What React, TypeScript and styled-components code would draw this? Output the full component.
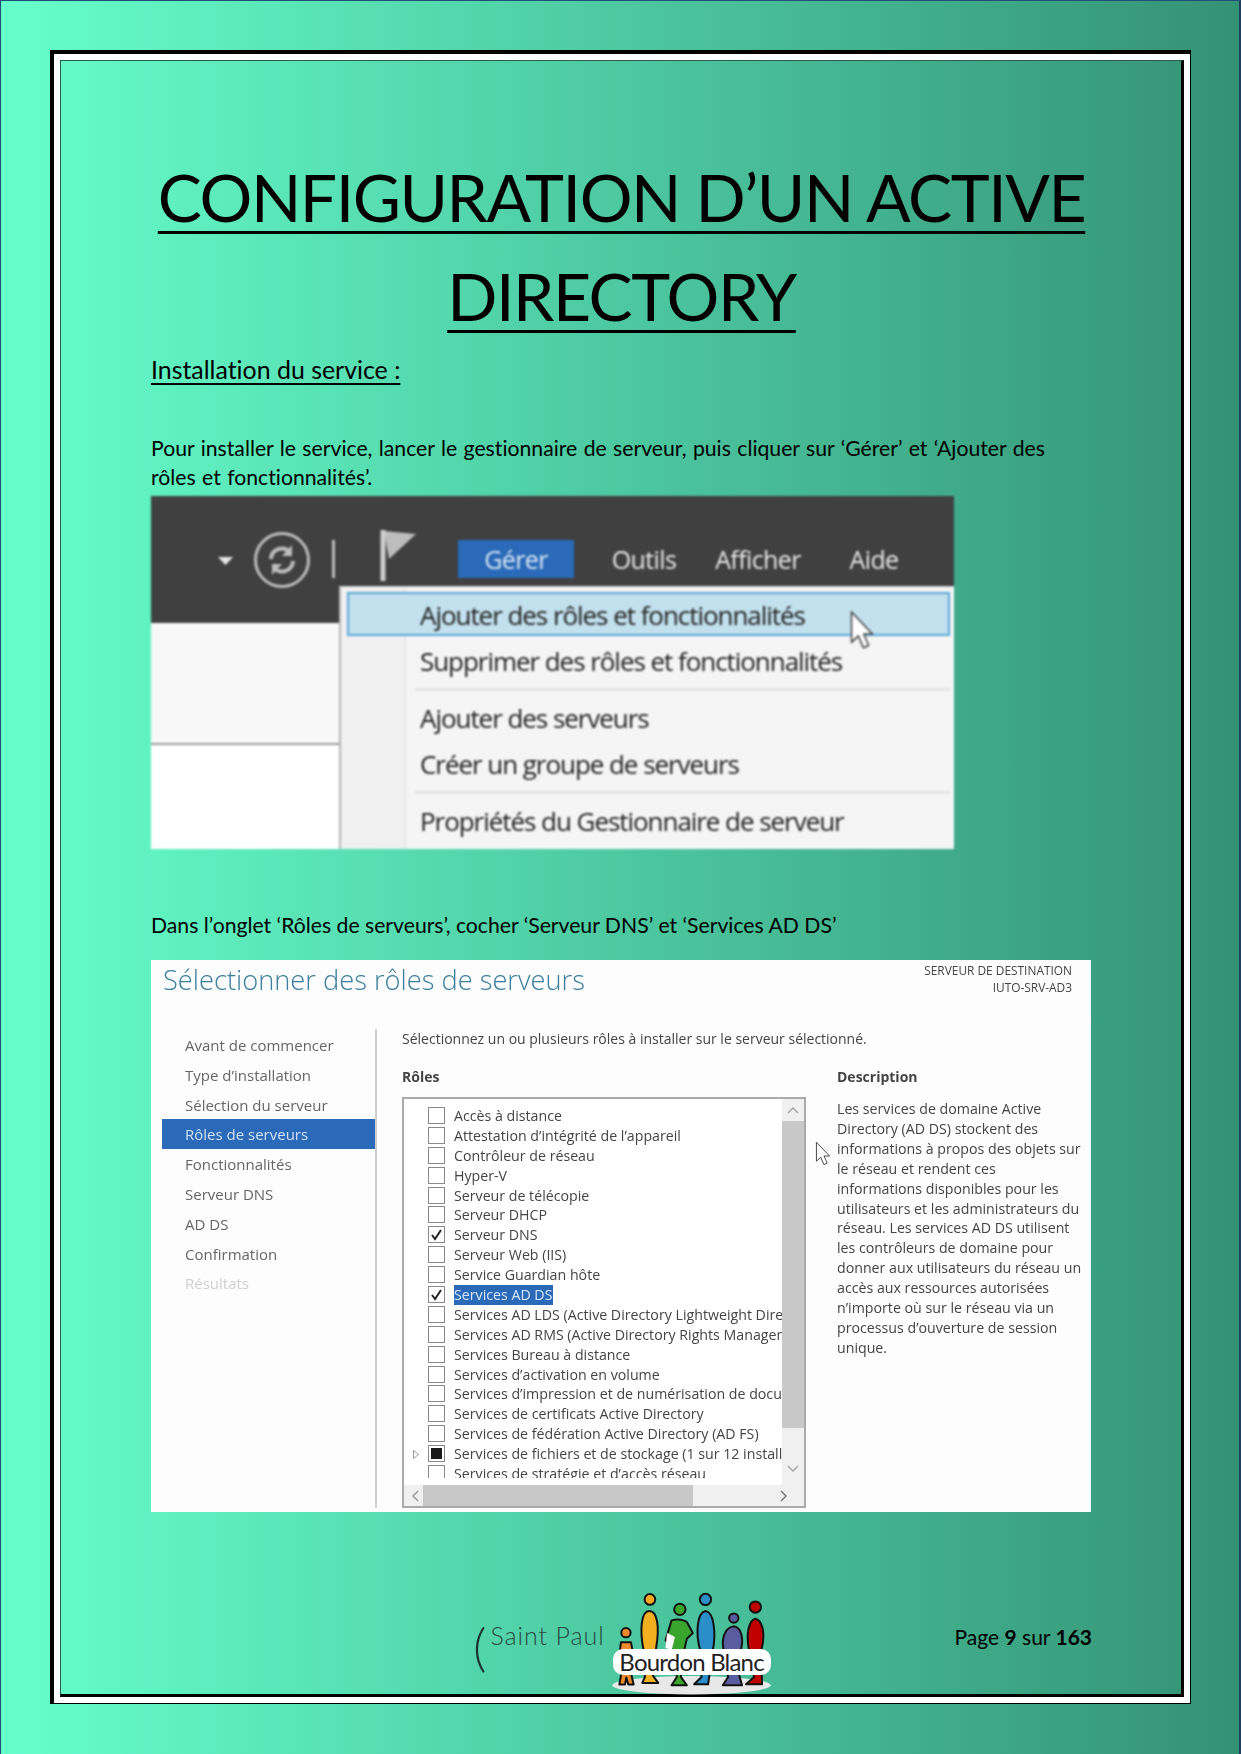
import React from "react";
import styled, { createGlobalStyle } from "styled-components";

const Global = createGlobalStyle`
  html, body { margin: 0; padding: 0; background: #fff; }
  * { box-sizing: border-box; }
`;

const Page = styled.div`
  width: 1241px; height: 1754px; overflow: hidden;
  padding: 49px 48px 0 49px;
  border-top: 1px solid #1f4e79; border-left: 1px solid #1f4e79; border-right: 2px solid #1f3f5f;
  background: linear-gradient(90deg, #66ffcc 0%, #349274 100%);
  font-family: Lato, "Liberation Sans", sans-serif; color: #000;
  font-variant-ligatures: none;
`;
const OuterFrame = styled.div`
  width: 1141px; height: 1654px;
  border-style: solid; border-color: #000; border-width: 4px 1px 1px 4px;
`;
const WhiteRing = styled.div`
  height: 100%; border: 6px solid #fff;
`;
const Inner = styled.div`
  height: 100%; padding: 86px 89px 0 90px;
  border-style: solid; border-color: #2c5a4c #000 #000 #2c5a4c; border-width: 1px 3px 3px 1px;
  display: flex; flex-direction: column;
`;
const Title = styled.h1`
  margin: 0; font-size: 66px; line-height: 99px; font-weight: 400; text-align: center;
  text-decoration: underline; text-decoration-thickness: 3px; text-underline-offset: 9px;
  letter-spacing: -1.45px;
`;
const SubHeading = styled.h2`
  margin: 9px 0 0; font-size: 24.9px; line-height: 30px; font-weight: 400;
  text-decoration: underline; text-decoration-thickness: 2px; text-underline-offset: 4px;
`;
const Para = styled.p<{ $top: number; $spread?: number }>`
  margin: ${(p) => p.$top}px 0 0; font-size: 21.2px; line-height: 29px;
  word-spacing: ${(p) => p.$spread ?? 0}px;
`;

/* first capture */
const ShotMenu = styled.div`
  position: relative; width: 803px; height: 353px; margin-top: 4px; background: #fff;
  overflow: hidden; filter: blur(0.8px); font-family: "Open Sans", sans-serif;
`;
const DarkBar = styled.div`
  height: 127px; background: #404040; padding: 36px 0 0 67px;
  display: flex; align-items: flex-start;
`;
const Caret = styled.svg` margin: 25px 0 0 0; `;
const Refresh = styled.svg` margin: 0 0 0 21px; `;
const Rule = styled.div`
  width: 3px; height: 38px; margin: 8px 0 0 22px; background: #bdbdbd;
`;
const Flag = styled.svg` margin: -3px 0 0 45px; `;
const TopItem = styled.div<{ $on?: boolean; $left: number; $w: number }>`
  margin: 8px 0 0 ${(p) => p.$left}px; width: ${(p) => p.$w}px; height: 38px;
  background: ${(p) => (p.$on ? "#2a6ab8" : "transparent")};
  color: ${(p) => (p.$on ? "#d8e6f5" : "#e8e8e8")};
  font-size: 25px; line-height: 38px; letter-spacing: -0.6px; text-align: center; white-space: nowrap;
`;
const GreyPane = styled.div`
  height: 122px; background: #f8f8f8; border-bottom: 2px solid #9a9a9a;
`;
const Menu = styled.div`
  position: absolute; left: 188px; top: 90px; right: 0; bottom: 0;
  background: #f5f5f5; border-left: 2px solid #b5b5b5; border-top: 1px solid #c8c8c8;
  padding: 5px 4px 0 6px; display: flex; flex-direction: column;
  &::before {
    content: ""; position: absolute; left: 0; top: 0; bottom: 0; width: 64px;
    background: #f0f0f0; border-right: 1px solid #e0e0e0;
  }
`;
const MenuItem = styled.div<{ $on?: boolean }>`
  position: relative; height: ${(p) => (p.$on ? 44 : 46)}px; margin-bottom: ${(p) => (p.$on ? 2 : 0)}px;
  padding-left: 71px; border: 2px solid ${(p) => (p.$on ? "#5aa8d8" : "transparent")};
  background: ${(p) => (p.$on ? "#c2e0ee" : "transparent")};
  font-size: 26px; line-height: 42px; letter-spacing: -1.05px; color: #222; white-space: nowrap;
`;
const MenuSep = styled.div<{ $gap: number }>`
  position: relative; height: 3px; margin: ${(p) => p.$gap}px 0 ${(p) => p.$gap}px 68px; background: #e4e4e4;
`;
const MenuCursor = styled.svg`
  position: absolute; left: 698px; top: 114px;
`;

/* second capture */
const ShotRoles = styled.div`
  position: relative; width: 940px; height: 552px; margin-top: 20px; background: #fdfdfd;
  overflow: hidden; filter: blur(0.6px); font-family: "Open Sans", sans-serif; color: #444;
  display: flex; flex-direction: column;
`;
const RolesHead = styled.div`
  height: 69px; display: flex; justify-content: space-between; padding: 0 19px 0 12px;
`;
const RolesTitle = styled.div`
  font-size: 27.25px; line-height: 40px; font-weight: 300; color: #3a7f9f;
`;
const Target = styled.div`
  margin-top: 2px; font-size: 11.9px; line-height: 16.5px; text-align: right; color: #444;
`;
const RolesBody = styled.div`
  display: flex; height: 479px;
`;
const Sidebar = styled.div`
  width: 226px; padding: 1px 0 0 11px; border-right: 2px solid #d0d0d0;
  display: flex; flex-direction: column;
`;
const Step = styled.div<{ $on?: boolean; $off?: boolean }>`
  height: 29.8px; width: 213px; padding-left: 23px; font-size: 15px; line-height: 30px;
  background: ${(p) => (p.$on ? "#2a6ab8" : "transparent")};
  color: ${(p) => (p.$on ? "#cfe0f5" : p.$off ? "#cfcfcf" : "#666")};
`;
const Main = styled.div`
  flex: 1; padding-left: 25px;
`;
const Intro = styled.div`
  font-size: 14px; line-height: 19px; color: #444; white-space: nowrap;
`;
const Columns = styled.div`
  margin-top: 19px; display: grid; grid-template-columns: 404px 254px; column-gap: 31px;
`;
const ColHead = styled.div`
  font-size: 14px; line-height: 20px; font-weight: 700; color: #444;
`;
const ListBox = styled.div`
  margin-top: 10px; width: 404px; height: 411px; border: 2px solid #aaa; background: #fff;
  display: grid; grid-template-columns: 1fr 22px; grid-template-rows: 1fr 21px;
`;
const Viewport = styled.div`
  margin: 7px 0 7px; overflow: hidden;
`;
const Row = styled.div`
  height: 19.9px; position: relative; padding-left: 50px; white-space: nowrap;
  font-size: 14.2px; line-height: 20px; color: #444; display: flex; align-items: center;
`;
const Box = styled.span<{ $fill?: boolean }>`
  position: absolute; left: 24px; top: 1px; width: 17px; height: 17px;
  border: 1.5px solid #8a8a8a; background: #fff;
  display: flex; align-items: center; justify-content: center;
  &::after {
    content: ""; display: ${(p) => (p.$fill ? "block" : "none")};
    width: 11px; height: 11px; background: #1a1a1a;
  }
`;
const Expander = styled.svg`
  position: absolute; left: 9px; top: 6px;
`;
const Picked = styled.span`
  background: #2a6ab8; color: #d6e6fa; margin-left: 0; padding-right: 1px; height: 20px;
`;
const VBar = styled.div`
  background: #f0f0f0; display: flex; flex-direction: column; align-items: center;
`;
const VThumb = styled.div`
  width: 100%; height: 307px; background: #c8c8c8; margin-top: 21px;
`;
const VEnd = styled.svg`
  margin-top: auto; margin-bottom: 13px;
`;
const VStart = styled.svg`
  margin-top: 8px; margin-bottom: -14px;
`;
const HBar = styled.div`
  grid-column: 1 / span 2; background: #f0f0f0; display: flex; align-items: center; padding: 0 17px 0 8px;
`;
const HThumb = styled.div`
  width: 270px; height: 100%; margin-left: 4px; background: #c8c8c8;
`;
const HEnd = styled.svg` margin-left: auto; `;
const Description = styled.div`
  margin-top: 12px; font-size: 14.2px; line-height: 19.9px; color: #444; white-space: pre-line; width: 260px;
`;
const RolesCursor = styled.svg`
  position: absolute; left: 664px; top: 181px;
`;

/* footer */
const Footer = styled.div`
  margin-top: 77px; height: 104px; display: flex; align-items: flex-start; position: relative;
`;
const Paren = styled.div`
  margin: 29px 0 0 322px; font-size: 52px; line-height: 56px; font-weight: 300; color: #1f332e;
`;
const SaintPaul = styled.div`
  margin: 31px 0 0 4px; font-size: 25px; line-height: 30px; font-weight: 300; color: #2b4a42; letter-spacing: 0.9px;
`;
const Logo = styled.div`
  position: relative; width: 163px; height: 111px; margin: -2px 0 0 6px;
`;
const Pill = styled.div`
  position: absolute; left: 2px; top: 62px; width: 158px; height: 26px; border-radius: 10px;
  background: #fff; color: #222; font-size: 24px; line-height: 26px; text-align: center; white-space: nowrap;
  letter-spacing: -0.8px; font-weight: 400;
`;
const PageNo = styled.div`
  margin: 34px 0 0 auto; font-size: 21px; line-height: 28px; color: #000;
`;

const Cursor = ({ as: Comp, w, h }: { as: any; w: number; h: number }) => (
  <Comp width={w} height={h} viewBox="0 0 13 21">
    <path d="M1 1 L1 17 L4.6 13.6 L7.2 19.8 L10 18.6 L7.4 12.6 L12 12.6 Z" fill="#fff" stroke="#444" strokeWidth="0.8" strokeLinejoin="round" />
  </Comp>
);

const roles: { t: string; k?: "check" | "fill" | "cut" | "pick"; }[] = [
  { t: "Accès à distance" },
  { t: "Attestation d’intégrité de l’appareil" },
  { t: "Contrôleur de réseau" },
  { t: "Hyper-V" },
  { t: "Serveur de télécopie" },
  { t: "Serveur DHCP" },
  { t: "Serveur DNS", k: "check" },
  { t: "Serveur Web (IIS)" },
  { t: "Service Guardian hôte" },
  { t: "Services AD DS", k: "pick" },
  { t: "Services AD LDS (Active Directory Lightweight Directory)" },
  { t: "Services AD RMS (Active Directory Rights Management)" },
  { t: "Services Bureau à distance" },
  { t: "Services d’activation en volume" },
  { t: "Services d’impression et de numérisation de documents" },
  { t: "Services de certificats Active Directory" },
  { t: "Services de fédération Active Directory (AD FS)" },
  { t: "Services de fichiers et de stockage (1 sur 12 installés)", k: "fill" },
  { t: "Services de stratégie et d’accès réseau" },
];

const steps = ["Avant de commencer", "Type d’installation", "Sélection du serveur", "Rôles de serveurs", "Fonctionnalités", "Serveur DNS", "AD DS", "Confirmation", "Résultats"];

const Check = () => (
  <svg width="13" height="13" viewBox="0 0 13 13">
    <path d="M2 7 L5 11 L11 2" fill="none" stroke="#222" strokeWidth="2" />
  </svg>
);

export default function App() {
  return (
    <Page>
      <Global />
      <OuterFrame>
        <WhiteRing>
          <Inner>
            <Title>CONFIGURATION D’UN ACTIVE<br />DIRECTORY</Title>
            <SubHeading>Installation du service :</SubHeading>
            <Para $top={50} $spread={1}>Pour installer le service, lancer le gestionnaire de serveur, puis cliquer sur ‘Gérer’ et ‘Ajouter des<br />rôles et fonctionnalités’.</Para>
            <ShotMenu>
              <DarkBar>
                <Caret width="15" height="8" viewBox="0 0 15 8"><path d="M0 0 H15 L7.5 8 Z" fill="#e8e8e8" /></Caret>
                <Refresh width="56" height="56" viewBox="0 0 56 56">
                  <ellipse cx="28" cy="28" rx="26.5" ry="26.5" fill="none" stroke="#bdbdbd" strokeWidth="3" />
                  <path d="M17 27 A11 11 0 0 1 36 20 M39 29 A11 11 0 0 1 20 36" fill="none" stroke="#bdbdbd" strokeWidth="4" />
                  <path d="M38 13 V24 H28 Z M18 43 V32 H28 Z" fill="#bdbdbd" />
                </Refresh>
                <Rule />
                <Flag width="36" height="52" viewBox="0 0 36 52">
                  <path d="M4 2 L36 5 L9 30 Z" fill="#bdbdbd" />
                  <path d="M3 1 V52" stroke="#cfcfcf" strokeWidth="5" />
                </Flag>
                <TopItem $on $left={42} $w={116}>Gérer</TopItem>
                <TopItem $left={35} $w={70}>Outils</TopItem>
                <TopItem $left={34} $w={90}>Afficher</TopItem>
                <TopItem $left={45} $w={52}>Aide</TopItem>
              </DarkBar>
              <GreyPane />
              <Menu>
                <MenuItem $on>Ajouter des rôles et fonctionnalités</MenuItem>
                <MenuItem>Supprimer des rôles et fonctionnalités</MenuItem>
                <MenuSep $gap={4} />
                <MenuItem>Ajouter des serveurs</MenuItem>
                <MenuItem>Créer un groupe de serveurs</MenuItem>
                <MenuSep $gap={4} />
                <MenuItem>Propriétés du Gestionnaire de serveur</MenuItem>
              </Menu>
              <Cursor as={MenuCursor} w={26} h={40} />
            </ShotMenu>
            <Para $top={62}>Dans l’onglet ‘Rôles de serveurs’, cocher ‘Serveur DNS’ et ‘Services AD DS’</Para>
            <ShotRoles>
              <RolesHead>
                <RolesTitle>Sélectionner des rôles de serveurs</RolesTitle>
                <Target>SERVEUR DE DESTINATION<br />IUTO-SRV-AD3</Target>
              </RolesHead>
              <RolesBody>
                <Sidebar>
                  {steps.map((s, i) => (
                    <Step key={s} $on={i === 3} $off={i === 8}>{s}</Step>
                  ))}
                </Sidebar>
                <Main>
                  <Intro>Sélectionnez un ou plusieurs rôles à installer sur le serveur sélectionné.</Intro>
                  <Columns>
                    <div>
                      <ColHead>Rôles</ColHead>
                      <ListBox>
                        <Viewport>
                          {roles.map((r) => (
                            <Row key={r.t}>
                              {r.k === "fill" && (
                                <Expander width="6" height="9" viewBox="0 0 6 9"><path d="M.5 .5 L5.5 4.5 L.5 8.5 Z" fill="none" stroke="#999" /></Expander>
                              )}
                              <Box $fill={r.k === "fill"}>{(r.k === "check" || r.k === "pick") && <Check />}</Box>
                              {r.k === "pick" ? <Picked>{r.t}</Picked> : r.t}
                            </Row>
                          ))}
                        </Viewport>
                        <VBar>
                          <VStart width="12" height="7" viewBox="0 0 12 7"><path d="M1 6 L6 1 L11 6" fill="none" stroke="#aaa" strokeWidth="1.5" /></VStart>
                          <VThumb />
                          <VEnd width="12" height="7" viewBox="0 0 12 7"><path d="M1 1 L6 6 L11 1" fill="none" stroke="#aaa" strokeWidth="1.5" /></VEnd>
                        </VBar>
                        <HBar>
                          <svg width="7" height="12" viewBox="0 0 7 12"><path d="M6 1 L1 6 L6 11" fill="none" stroke="#999" strokeWidth="1.5" /></svg>
                          <HThumb />
                          <HEnd width="7" height="12" viewBox="0 0 7 12"><path d="M1 1 L6 6 L1 11" fill="none" stroke="#777" strokeWidth="1.5" /></HEnd>
                        </HBar>
                      </ListBox>
                    </div>
                    <div>
                      <ColHead>Description</ColHead>
                      <Description>{"Les services de domaine Active\nDirectory (AD DS) stockent des\ninformations à propos des objets sur\nle réseau et rendent ces\ninformations disponibles pour les\nutilisateurs et les administrateurs du\nréseau. Les services AD DS utilisent\nles contrôleurs de domaine pour\ndonner aux utilisateurs du réseau un\naccès aux ressources autorisées\nn’importe où sur le réseau via un\nprocessus d’ouverture de session\nunique."}</Description>
                    </div>
                  </Columns>
                </Main>
              </RolesBody>
              <Cursor as={RolesCursor} w={16} h={25} />
            </ShotRoles>
            <Footer>
              <Paren>(</Paren>
              <SaintPaul>Saint Paul</SaintPaul>
              <Logo>
                <svg width="163" height="111" viewBox="480 50 490 333">
                  <ellipse cx="722" cy="345" rx="238" ry="28" fill="#e8e8e8" />
                  <g stroke="#111" strokeWidth="6" strokeLinejoin="round">
                    <circle cx="525" cy="187" r="14" fill="#ee8a2c" />
                    <path d="M510 216 C505 240 506 280 512 305 L505 343 H522 L526 322 L532 343 H548 L538 300 C545 270 545 235 540 216 Z" fill="#ee8a2c" />
                    <circle cx="597" cy="87" r="16" fill="#f4a91f" />
                    <path d="M595 122 C570 122 566 180 578 240 L582 320 L574 338 H622 L606 316 L616 230 C626 170 620 122 595 122 Z" fill="#f2b021" />
                    <circle cx="687" cy="117" r="17" fill="#3aa52d" />
                    <path d="M662 150 C680 145 700 148 708 155 L726 188 L708 205 L700 240 L690 320 L708 345 H662 L678 320 L664 240 L652 215 L644 210 Z" fill="#3aa52d" />
                    <circle cx="764" cy="87" r="17" fill="#2a8ec8" />
                    <path d="M764 122 C738 128 734 190 748 240 L752 320 L730 342 H772 L786 240 C796 190 790 125 764 122 Z" fill="#2a8ec8" />
                    <circle cx="849" cy="143" r="14" fill="#5a5ca0" />
                    <path d="M848 168 C820 172 810 210 820 245 L832 320 L816 345 H874 L864 310 L870 240 C880 205 872 170 848 168 Z" fill="#5a5ca0" />
                    <circle cx="914" cy="110" r="17" fill="#c00000" />
                    <path d="M914 145 C894 150 885 190 895 240 L910 320 L886 342 H934 L932 240 C945 190 936 150 914 145 Z" fill="#c00000" />
                  </g>
                  <path d="M649 188 L672 200 L662 240 L644 232 Z" fill="#fff" stroke="#ccc" strokeWidth="1" />
                </svg>
                <Pill>Bourdon Blanc</Pill>
              </Logo>
              <PageNo>Page <b>9</b> sur <b>163</b></PageNo>
            </Footer>
          </Inner>
        </WhiteRing>
      </OuterFrame>
    </Page>
  );
}
